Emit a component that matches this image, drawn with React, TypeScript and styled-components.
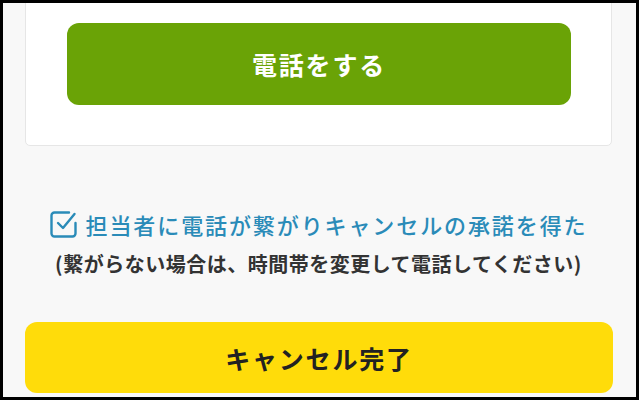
import React from "react";
import styled, { createGlobalStyle } from "styled-components";

const Global = createGlobalStyle`
  html, body { margin: 0; padding: 0; background: #ffffff; }
  * { box-sizing: border-box; }
  body { font-family: "Noto Sans CJK JP", "Noto Sans", sans-serif; }
`;

const Frame = styled.div`
  width: 639px;
  height: 400px;
  border: 3px solid #000;
  background: #f8f8f8;
  overflow: hidden;
  display: flex;
  flex-direction: column;
  padding: 0 24px 0 22px;
`;

const Card = styled.section`
  margin-top: -22px;
  background: #ffffff;
  border: 1px solid #e6e6e6;
  border-radius: 5px;
  padding: 41px 40px 40px 41px;
`;

const Button = styled.button<{ $variant: "green" | "yellow" }>`
  width: 100%;
  border: none;
  border-radius: 12px;
  font-family: "Noto Sans CJK JP", sans-serif;
  font-weight: 700;
  font-size: 25px;
  letter-spacing: 1.8px;
  display: flex;
  align-items: center;
  justify-content: center;
  cursor: pointer;
  height: ${(p) => (p.$variant === "green" ? "82px" : "71px")};
  background: ${(p) => (p.$variant === "green" ? "#6aa306" : "#ffdc0a")};
  color: ${(p) => (p.$variant === "green" ? "#ffffff" : "#222222")};
`;

const Confirm = styled.div`
  margin-top: 63px;
  display: flex;
  flex-direction: column;
  align-items: center;
  gap: 10px;
`;

const CheckRow = styled.label`
  display: flex;
  align-items: center;
  gap: 9px;
  color: #2a8bb8;
  font-size: 22px;
  font-weight: 500;
  letter-spacing: 1.9px;
  line-height: 30px;
  white-space: nowrap;

  svg {
    flex-shrink: 0;
  }
`;

const Note = styled.p`
  margin: 0;
  color: #333333;
  font-size: 20px;
  font-weight: 700;
  letter-spacing: 0.5px;
  line-height: 30px;
  white-space: nowrap;
`;

const Footer = styled.div`
  margin-top: 43px;
  margin-right: -1px;
`;

function CheckIcon() {
  return (
    <svg width="27" height="27" viewBox="0 0 27 27" fill="none" stroke="#2a8bb8" strokeWidth="2.4" strokeLinecap="round" strokeLinejoin="round">
      <path d="M25.5 12v10.5a3 3 0 0 1-3 3h-18a3 3 0 0 1-3-3v-18a3 3 0 0 1 3-3h14.5" />
      <path d="M8 12l5 5L24.5 3" />
    </svg>
  );
}

export default function App() {
  return (
    <>
      <Global />
      <Frame>
        <Card>
          <Button $variant="green">電話をする</Button>
        </Card>
        <Confirm>
          <CheckRow>
            <CheckIcon />
            担当者に電話が繋がりキャンセルの承諾を得た
          </CheckRow>
          <Note>(繋がらない場合は、時間帯を変更して電話してください)</Note>
        </Confirm>
        <Footer>
          <Button $variant="yellow">キャンセル完了</Button>
        </Footer>
      </Frame>
    </>
  );
}
